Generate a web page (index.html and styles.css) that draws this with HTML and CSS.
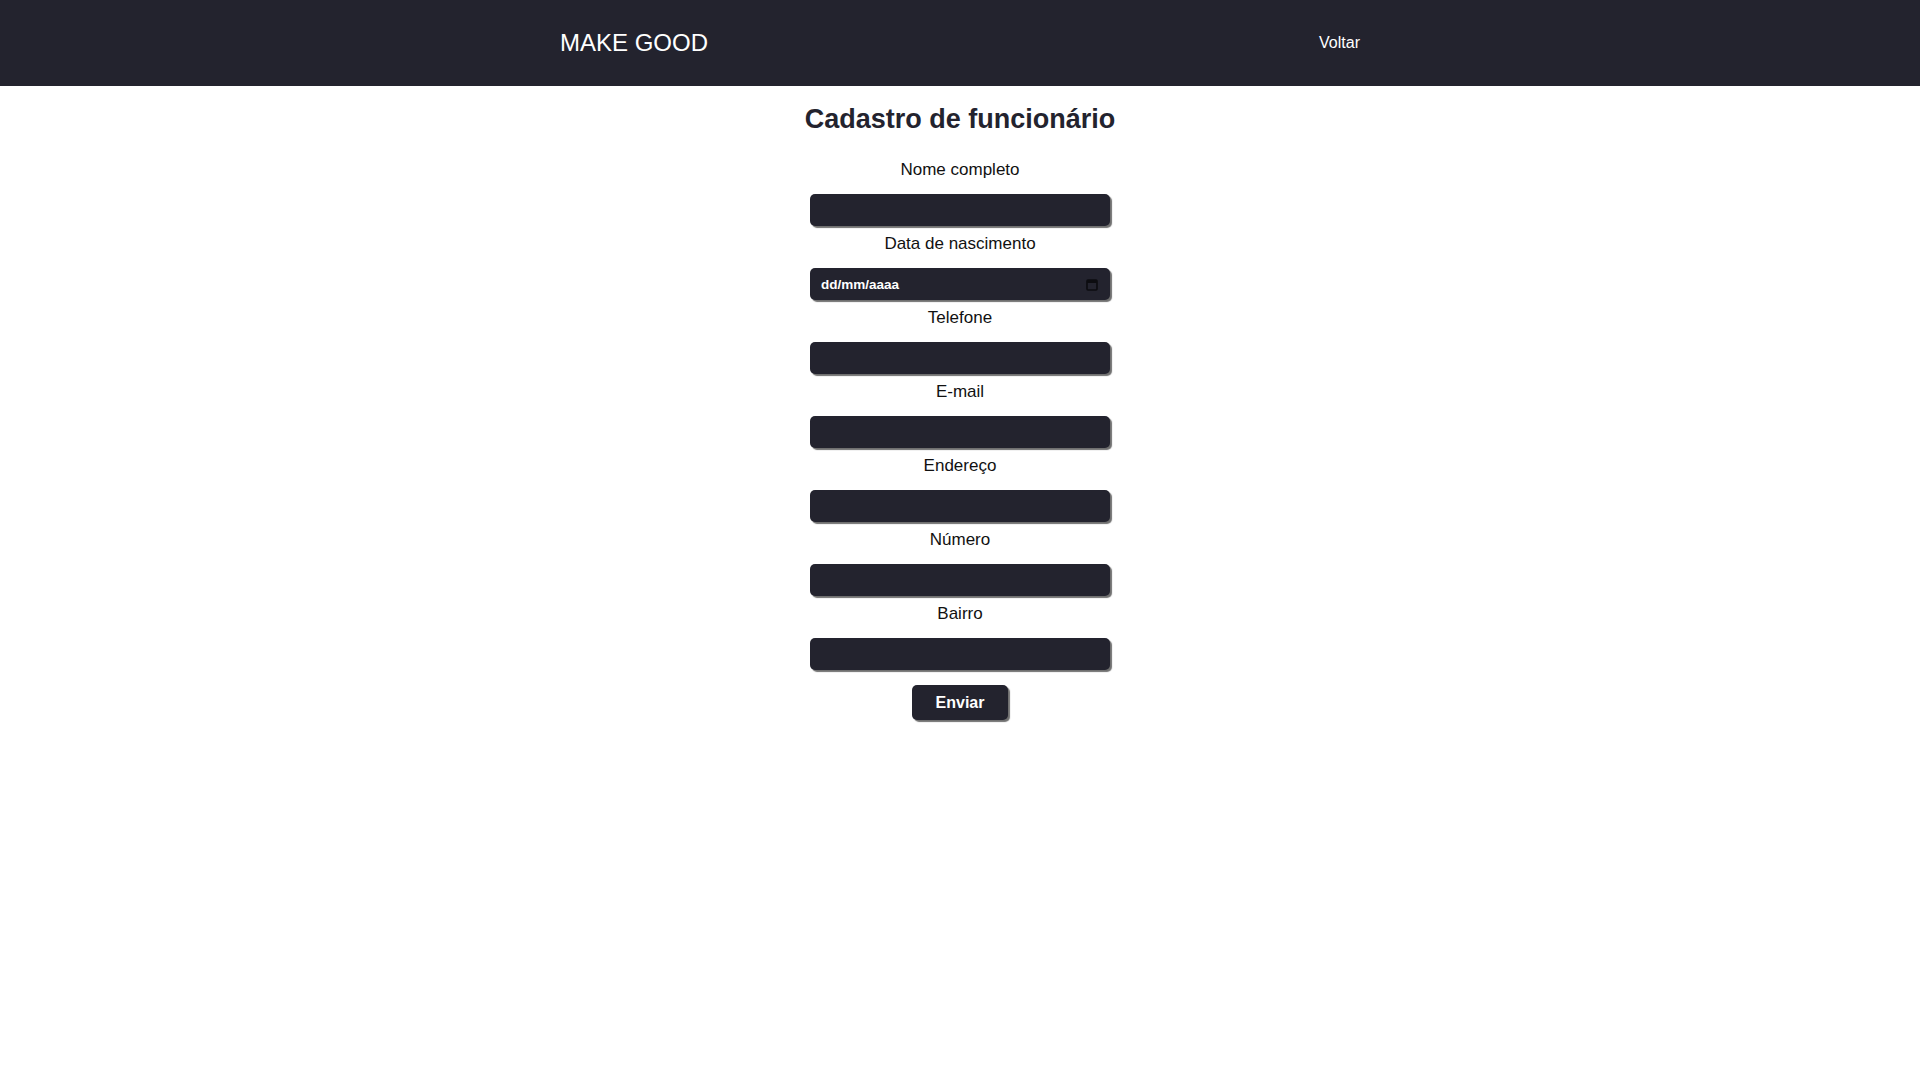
FILE: index.html
```html
<!DOCTYPE html>
<html lang="pt-BR">
<head>
<meta charset="utf-8">
<title>Cadastro de funcionário</title>
<link rel="stylesheet" href="styles.css">
</head>
<body>
<header class="topbar">
  <div class="topbar-inner">
    <span class="brand">MAKE GOOD</span>
    <a class="back" href="#">Voltar</a>
  </div>
</header>
<main class="page">
  <h1 class="title">Cadastro de funcionário</h1>
  <form class="form">
    <label class="label" for="nome">Nome completo</label>
    <input class="field" id="nome" type="text">
    <label class="label" for="nasc">Data de nascimento</label>
    <div class="field field-date" id="nasc">
      <span class="date-text">dd/mm/aaaa</span>
      <svg class="cal-icon" width="12" height="13" viewBox="0 0 12 13" aria-hidden="true">
        <rect x="1" y="2" width="10" height="10" rx="1" fill="none" stroke="#0c0c10" stroke-width="1.6"/>
        <rect x="1" y="2" width="10" height="3" fill="#0c0c10"/>
      </svg>
    </div>
    <label class="label" for="tel">Telefone</label>
    <input class="field" id="tel" type="text">
    <label class="label" for="email">E-mail</label>
    <input class="field" id="email" type="text">
    <label class="label" for="end">Endereço</label>
    <input class="field" id="end" type="text">
    <label class="label" for="num">Número</label>
    <input class="field" id="num" type="text">
    <label class="label" for="bairro">Bairro</label>
    <input class="field" id="bairro" type="text">
    <button class="submit" type="button">Enviar</button>
  </form>
</main>
</body>
</html>
```
FILE: styles.css
```css
* {
  box-sizing: border-box;
}

html, body {
  margin: 0;
  padding: 0;
}

::-webkit-scrollbar {
  width: 17px;
  height: 17px;
  background: #f1f1f1;
}

::-webkit-scrollbar-track {
  background: #f1f1f1;
}

::-webkit-scrollbar-thumb {
  background: #c1c1c1;
  border: 2px solid #f1f1f1;
}

::-webkit-scrollbar-corner {
  background: #dcdcdc;
}

::-webkit-scrollbar-button:single-button {
  display: block;
  width: 17px;
  height: 17px;
  background-color: #f1f1f1;
  background-repeat: no-repeat;
  background-position: center;
}

::-webkit-scrollbar-button:single-button:vertical:decrement {
  background-image: url("data:image/svg+xml;utf8,<svg xmlns='http://www.w3.org/2000/svg' width='17' height='17'><path d='M5 10.5h7L8.5 6.5z' fill='%23a3a3a3'/></svg>");
}

::-webkit-scrollbar-button:single-button:vertical:increment {
  background-image: url("data:image/svg+xml;utf8,<svg xmlns='http://www.w3.org/2000/svg' width='17' height='17'><path d='M5 6.5h7L8.5 10.5z' fill='%23505050'/></svg>");
}

::-webkit-scrollbar-button:single-button:horizontal:decrement {
  background-image: url("data:image/svg+xml;utf8,<svg xmlns='http://www.w3.org/2000/svg' width='17' height='17'><path d='M10.5 5v7L6.5 8.5z' fill='%23a3a3a3'/></svg>");
}

::-webkit-scrollbar-button:single-button:horizontal:increment {
  background-image: url("data:image/svg+xml;utf8,<svg xmlns='http://www.w3.org/2000/svg' width='17' height='17'><path d='M6.5 5v7L10.5 8.5z' fill='%23505050'/></svg>");
}

body {
  font-family: "Liberation Sans", Arial, sans-serif;
  background: #ffffff;
  color: #111111;
}

.topbar {
  width: 100vw;
  height: 86px;
  background: #23232e;
  display: flex;
  justify-content: center;
}

.topbar-inner {
  width: 800px;
  display: flex;
  align-items: center;
  justify-content: space-between;
}

.brand {
  color: #ffffff;
  font-size: 24px;
  line-height: 28px;
}

.back {
  color: #ffffff;
  font-size: 16px;
  text-decoration: none;
  margin-bottom: 1px;
}

.page {
  width: 100vw;
  min-height: 100vh;
  display: flex;
  flex-direction: column;
  align-items: center;
}

.title {
  margin: 18px 0 25px;
  font-size: 27px;
  line-height: 31px;
  font-weight: 700;
  color: #23232e;
}

.form {
  display: flex;
  flex-direction: column;
  align-items: center;
}

.label {
  font-size: 17px;
  line-height: 20px;
  color: #111111;
  margin-bottom: 14px;
}

.field {
  width: 300px;
  height: 32px;
  margin: 0 0 8px;
  border: none;
  border-radius: 5px;
  background: #23232e;
  box-shadow: 2px 2px 1px #707070;
  color: #ffffff;
  font-family: "Liberation Sans", Arial, sans-serif;
  font-size: 14px;
  padding: 0 10px;
  outline: none;
}

.field-date {
  display: flex;
  align-items: center;
  justify-content: space-between;
  padding: 0 12px 0 11px;
}

.date-text {
  font-size: 13.5px;
  font-weight: 700;
  color: #ffffff;
}

.cal-icon {
  display: block;
}

.submit {
  margin-top: 7px;
  height: 35px;
  padding: 0 24px;
  border: none;
  border-radius: 5px;
  background: #23232e;
  box-shadow: 2px 2px 1px #707070;
  color: #ffffff;
  font-family: "Liberation Sans", Arial, sans-serif;
  font-size: 16px;
  font-weight: 700;
  cursor: pointer;
}
```
